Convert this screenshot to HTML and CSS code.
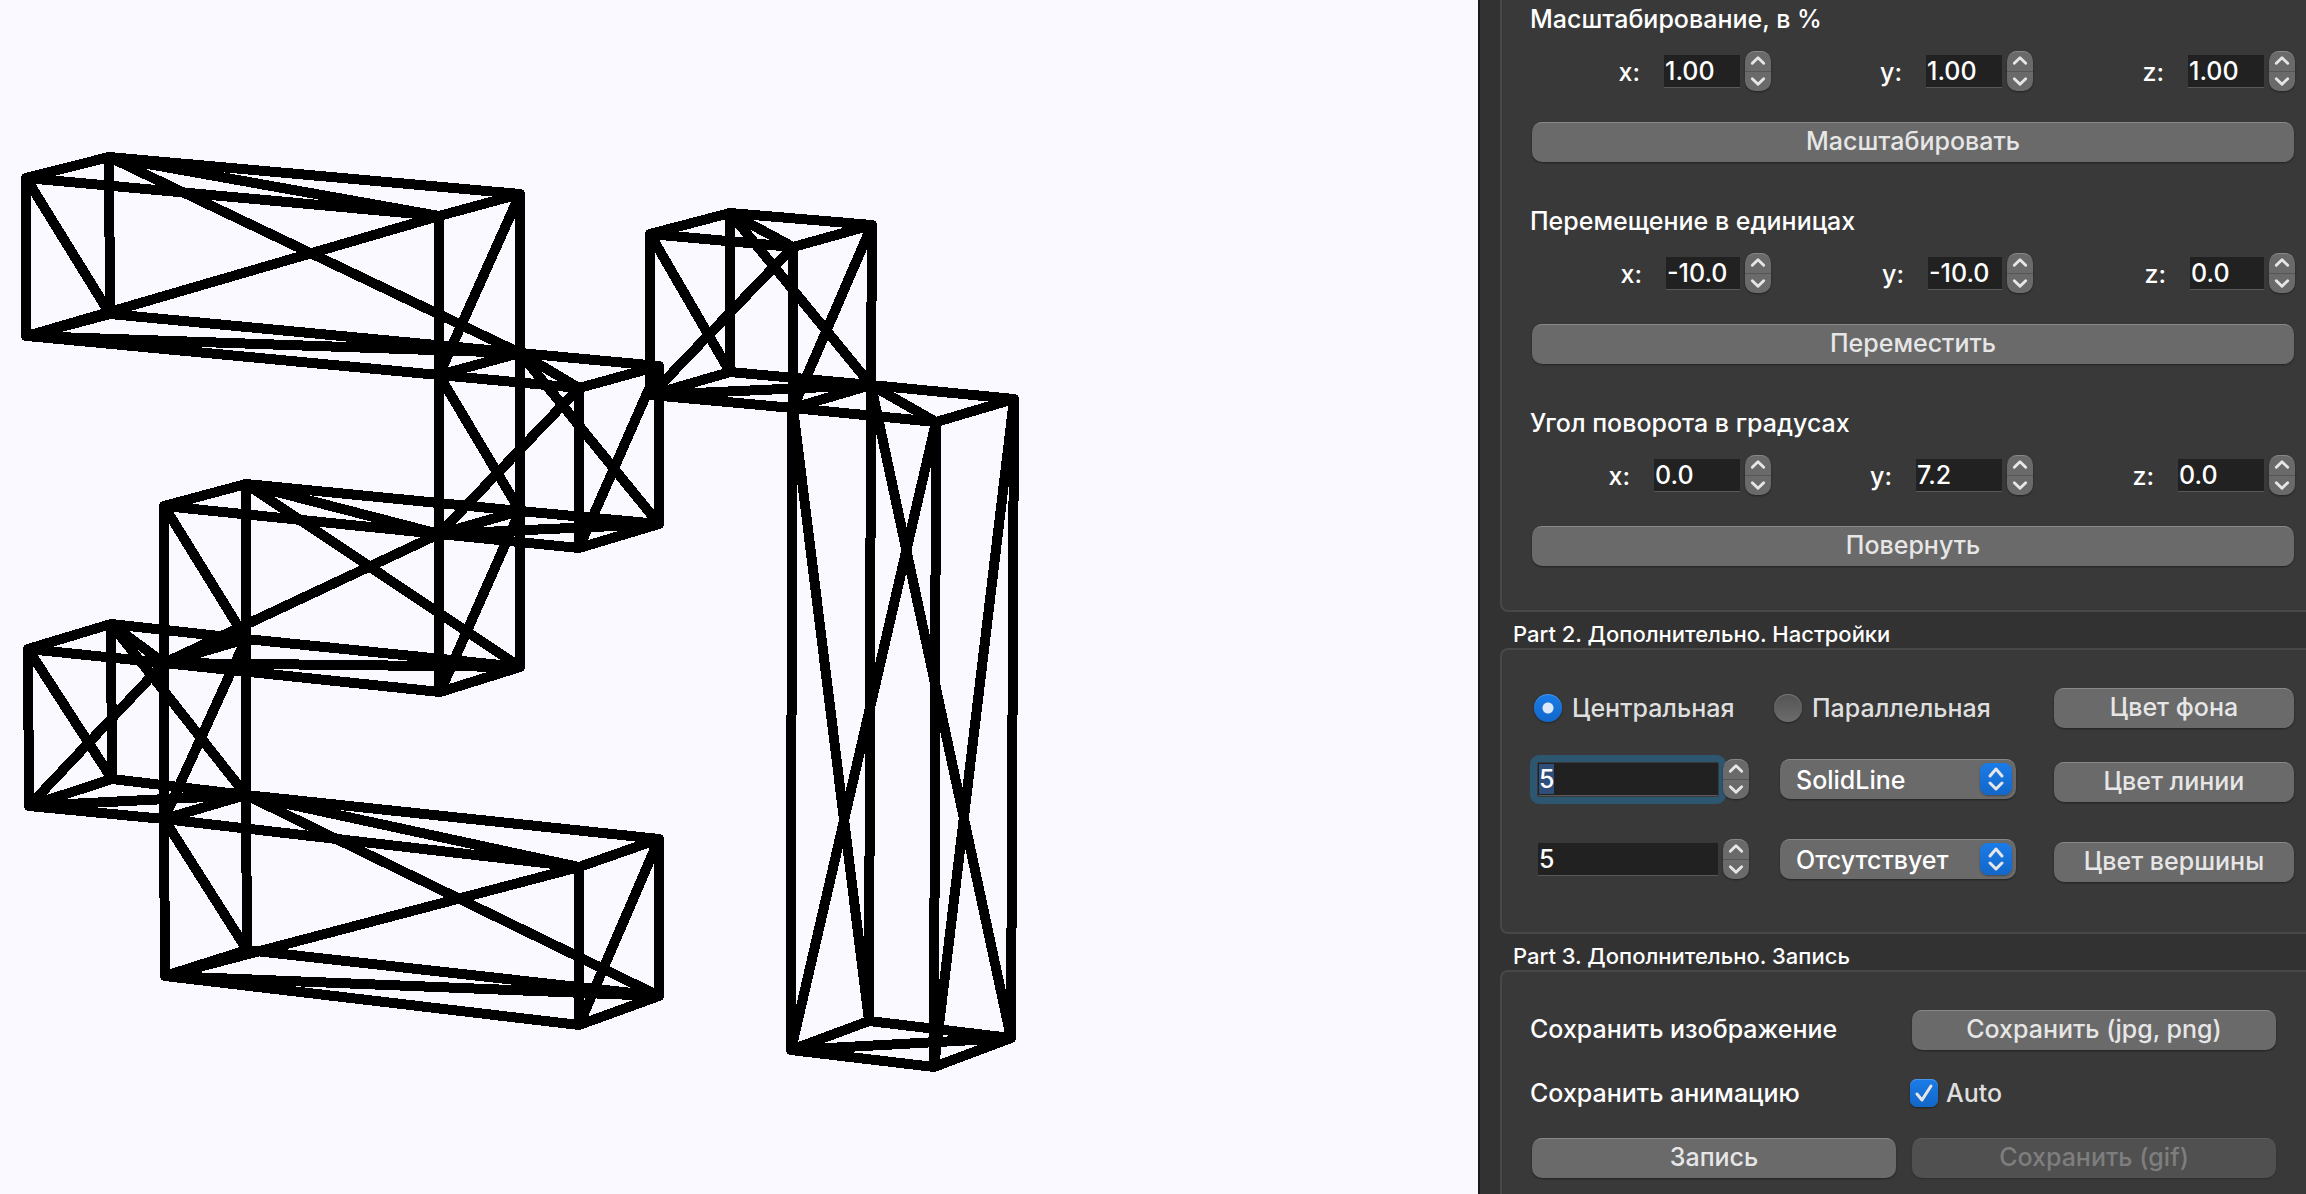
FILE: index.html
```
<!DOCTYPE html>
<html lang="ru">
<head>
<meta charset="utf-8">
<title>3D</title>
<link rel="stylesheet" href="styles.css">
</head>
<body>
<svg class="defs" aria-hidden="true">
  <symbol id="up" viewBox="0 0 26 20"><path d="M7 13l6-6 6 6"/></symbol>
  <symbol id="down" viewBox="0 0 26 20"><path d="M7 7l6 6 6-6"/></symbol>
  <symbol id="updown" viewBox="0 0 32 32"><path d="M10 13l6-7 6 7M10 20l6 6 6-6"/></symbol>
</svg>
<div class="app">
  <main class="scene">
    <svg class="scene-drawing" width="1478" height="1194" viewBox="0 0 1478 1194" role="img" aria-label="3D">
      <!-- each prism: top face, bottom face, uprights, face diagonals -->
      <path d="M26 178L109 157L520 194L439 216ZM27 336L110 314L520 353L439 375ZM26 178V336M109 157L110 314M520 194V353M439 216V375M26 178L110 314M109 157L439 216L27 336L520 353L109 157M520 194L439 375"/>
      <path d="M439 375L520 353L659 366L579 388ZM439 534L520 511L659 524L579 548ZM439 375V534M520 353V511M659 366V524M579 388V548M439 375L520 511M520 353L579 388L439 534L659 524L520 353M659 366L579 548"/>
      <path d="M164 506L246 484L520 511L439 534ZM164 663L246 639L520 667L440 692ZM164 506V663M246 484V639M520 511V667M439 534V692M164 506L246 639M246 484L439 534L164 663L520 667L246 484M520 511L440 692"/>
      <path d="M28 649L111 624L246 639L164 663ZM29 806L112 779L246 795L164 819ZM28 649L29 806M111 624L112 779M246 639V795M164 663V819M28 649L112 779M111 624L164 663L29 806L246 795L111 624M246 639L164 819"/>
      <path d="M164 819L246 795L659 839L579 867ZM165 976L247 950L659 996L579 1025ZM164 819L165 976M246 795L247 950M659 839V996M579 867V1025M164 819L247 950M246 795L579 867L165 976L659 996L246 795M659 839L579 1025"/>
      <path d="M650 234L730 213L872 225L793 247ZM651 395L730 372L871 385L793 408ZM650 234V395M730 213V372M872 225L871 385M793 247V408M650 234L730 372M730 213L793 247L651 395L871 385L730 213M872 225L793 408"/>
      <path d="M793 408L871 385L1014 399L936 422ZM791 1050L869 1021L1011 1038L934 1067ZM792 408L791 1050M871 385L869 1021M1014 399L1011 1038M936 422L934 1067M793 408L869 1021M871 385L936 422L791 1050L1011 1038L871 385M1014 399L934 1067"/>
    </svg>
  </main>

  <aside class="panel">
    <section class="group group-first">
      <div class="transform">
        <h3 class="caption">Масштабирование, в %</h3>
        <div class="axes axes-scale">
          <div class="axis"><label for="sx">x:</label><div class="spin"><input id="sx" type="text" inputmode="decimal" value="1.00"><div class="stepper"><button aria-label="+"><svg><use href="#up"/></svg></button><button aria-label="−"><svg><use href="#down"/></svg></button></div></div></div>
          <div class="axis"><label for="sy">y:</label><div class="spin"><input id="sy" type="text" inputmode="decimal" value="1.00"><div class="stepper"><button aria-label="+"><svg><use href="#up"/></svg></button><button aria-label="−"><svg><use href="#down"/></svg></button></div></div></div>
          <div class="axis"><label for="sz">z:</label><div class="spin"><input id="sz" type="text" inputmode="decimal" value="1.00"><div class="stepper"><button aria-label="+"><svg><use href="#up"/></svg></button><button aria-label="−"><svg><use href="#down"/></svg></button></div></div></div>
        </div>
        <button class="btn">Масштабировать</button>
      </div>
      <div class="transform">
        <h3 class="caption">Перемещение в единицах</h3>
        <div class="axes axes-move">
          <div class="axis"><label for="mx">x:</label><div class="spin"><input id="mx" type="text" inputmode="decimal" value="-10.0"><div class="stepper"><button aria-label="+"><svg><use href="#up"/></svg></button><button aria-label="−"><svg><use href="#down"/></svg></button></div></div></div>
          <div class="axis"><label for="my">y:</label><div class="spin"><input id="my" type="text" inputmode="decimal" value="-10.0"><div class="stepper"><button aria-label="+"><svg><use href="#up"/></svg></button><button aria-label="−"><svg><use href="#down"/></svg></button></div></div></div>
          <div class="axis"><label for="mz">z:</label><div class="spin"><input id="mz" type="text" inputmode="decimal" value="0.0"><div class="stepper"><button aria-label="+"><svg><use href="#up"/></svg></button><button aria-label="−"><svg><use href="#down"/></svg></button></div></div></div>
        </div>
        <button class="btn">Переместить</button>
      </div>
      <div class="transform">
        <h3 class="caption">Угол поворота в градусах</h3>
        <div class="axes axes-rotate">
          <div class="axis"><label for="rx">x:</label><div class="spin"><input id="rx" type="text" inputmode="decimal" value="0.0"><div class="stepper"><button aria-label="+"><svg><use href="#up"/></svg></button><button aria-label="−"><svg><use href="#down"/></svg></button></div></div></div>
          <div class="axis"><label for="ry">y:</label><div class="spin"><input id="ry" type="text" inputmode="decimal" value="7.2"><div class="stepper"><button aria-label="+"><svg><use href="#up"/></svg></button><button aria-label="−"><svg><use href="#down"/></svg></button></div></div></div>
          <div class="axis"><label for="rz">z:</label><div class="spin"><input id="rz" type="text" inputmode="decimal" value="0.0"><div class="stepper"><button aria-label="+"><svg><use href="#up"/></svg></button><button aria-label="−"><svg><use href="#down"/></svg></button></div></div></div>
        </div>
        <button class="btn">Повернуть</button>
      </div>
    </section>

    <h2 class="group-title">Part 2. Дополнительно. Настройки</h2>
    <section class="group settings">
      <div class="settings-row">
        <label class="choice"><input type="radio" name="projection" checked>Центральная</label>
        <label class="choice"><input type="radio" name="projection">Параллельная</label>
        <button class="btn">Цвет фона</button>
      </div>
      <div class="settings-row">
        <div class="spin"><input id="line-width" type="text" inputmode="numeric" value="5" aria-label="Линия" autofocus><div class="stepper"><button aria-label="+"><svg><use href="#up"/></svg></button><button aria-label="−"><svg><use href="#down"/></svg></button></div></div>
        <div class="dropdown"><select aria-label="Линия"><option>SolidLine</option></select><svg class="dropdown-mark"><use href="#updown"/></svg></div>
        <button class="btn">Цвет линии</button>
      </div>
      <div class="settings-row">
        <div class="spin"><input type="text" inputmode="numeric" value="5" aria-label="Вершина"><div class="stepper"><button aria-label="+"><svg><use href="#up"/></svg></button><button aria-label="−"><svg><use href="#down"/></svg></button></div></div>
        <div class="dropdown"><select aria-label="Вершина"><option>Отсутствует</option></select><svg class="dropdown-mark"><use href="#updown"/></svg></div>
        <button class="btn">Цвет вершины</button>
      </div>
    </section>

    <h2 class="group-title">Part 3. Дополнительно. Запись</h2>
    <section class="group record">
      <span class="caption">Сохранить изображение</span>
      <button class="btn">Сохранить (jpg, png)</button>
      <span class="caption">Сохранить анимацию</span>
      <label class="check"><span class="check-box"><input type="checkbox" checked><svg viewBox="0 0 28 28"><path d="M7 15l5 6 9-14"/></svg></span>Auto</label>
      <button class="btn">Запись</button>
      <button class="btn" disabled>Сохранить (gif)</button>
    </section>
  </aside>
</div>
<script src="app.js"></script>
</body>
</html>
```
FILE: app.js
```
const lineWidth = document.getElementById('line-width');
lineWidth.focus();
lineWidth.select();
```
FILE: styles.css
```
* { box-sizing: border-box; }

body {
  margin: 0;
  background: #323232;
  color: #fff;
  font: 500 25px/32px Inter, "Liberation Sans", sans-serif;
}

button, input, select {
  margin: 0;
  padding: 0;
  border: 0;
  color: inherit;
  font: inherit;
}

.defs { position: absolute; width: 0; height: 0; }

.app {
  display: grid;
  grid-template-columns: minmax(0, 1fr) 828px;
  height: 100vh;
  overflow: hidden;
}

.scene { overflow: hidden; background: #f9f9ff; }
.scene-drawing {
  display: block;
  fill: none;
  stroke: #000;
  stroke-width: 10px;
  stroke-linecap: round;
  stroke-linejoin: round;
  shape-rendering: crispEdges;
}

.panel {
  display: flex;
  flex-direction: column;
  min-height: 0;
  padding-left: 20px;
  border-left: 2px solid #1a1a1a;
  overflow: hidden;
}

.group {
  flex: none;
  padding: 38px 11px 0 28px;
  border: 2px solid #484848;
  border-right: 0;
  border-radius: 8px 0 0 8px;
  background: #393939;
}
.group-title {
  flex: none;
  margin: 0;
  padding: 8px 0 0 13px;
  font-size: 22px;
  font-weight: 500;
  line-height: 28px;
}
.caption { margin: 0; font-size: 25px; font-weight: 500; line-height: 32px; }

.btn {
  height: 40px;
  margin: 0 1px 0 2px;
  padding-bottom: 2px;
  border-radius: 10px;
  background: #6a6a6a;
  box-shadow: inset 0 2px 0 -1px #888, 0 1px 2px #0006;
  color: #e6e6e6;
  white-space: nowrap;
}
.btn:disabled { background: #505050; box-shadow: inset 0 2px 0 -1px #5d5d5d, 0 1px 2px #0003; color: #7e7e7e; }

/* transforms */
.group-first {
  display: flex;
  flex-direction: column;
  gap: 43px;
  padding-top: 3px;
  padding-bottom: 44px;
  border-top: 0;
  border-radius: 0 0 0 8px;
}
.transform { display: flex; flex-direction: column; }
.axes {
  display: grid;
  grid-template-columns: repeat(3, 1fr);
  gap: 21px;
  margin: 16px 0 31px;
}
.axis { display: flex; align-items: center; justify-content: flex-end; gap: 24px; }
.axis label { padding-top: 2px; }
.axis .spin input { width: 76px; }
.axes-move .spin input { width: 74px; }
.axes-rotate .spin input { width: 86px; }

/* spin boxes */
.spin { display: flex; align-items: center; gap: 5px; height: 40px; }
.spin input {
  min-width: 0;
  height: 33px;
  padding: 1px 1px 0;
  border-bottom: 1px solid #5a5a5a;
  background: #212121;
  outline: 0 solid #2d5671;
}
.spin input:focus { outline-width: 7px; outline-offset: 1px; border-radius: 1px; }
.spin input::selection { background: #2f4e7c; color: #fff; }
.stepper {
  display: flex;
  flex-direction: column;
  width: 26px;
  height: 40px;
  border-radius: 10px;
  background: #6a6a6a;
  box-shadow: inset 0 2px 0 -1px #888, 0 1px 2px #0006;
}
.stepper button { flex: 1; height: 20px; background: none; }
.stepper button + button { border-top: 1px solid #565656; }
.stepper svg { display: block; width: 26px; height: 19px; }
.stepper svg, .dropdown-mark, .check svg {
  fill: none;
  stroke: #e6e6e6;
  stroke-width: 3px;
  stroke-linecap: round;
  stroke-linejoin: round;
}

/* drawing settings */
.settings { padding-bottom: 50px; }
.settings-row {
  display: grid;
  grid-template-columns: 244px minmax(0, 1fr) 243px;
  height: 43px;
  margin-bottom: 37px;
}
.settings-row:first-child { height: 40px; margin-bottom: 31px; }
.settings-row:last-child { margin-bottom: 0; }
.settings-row .btn { align-self: end; }
.settings-row .spin { padding-left: 8px; }
.settings-row .spin input { width: 180px; }

.choice { display: flex; align-items: center; gap: 10px; padding-left: 4px; color: #dfdfdf; }
.choice + .choice { padding-left: 0; }
.choice input {
  flex: none;
  width: 28px;
  height: 28px;
  border-radius: 50%;
  appearance: none;
  background: linear-gradient(#545454, #6c6c6c);
  box-shadow: inset 0 1px 0 #777, 0 1px 2px #0006;
}
.choice input:checked {
  background: radial-gradient(circle, #dce9f8 5px, #0000 6px), linear-gradient(#1b7ce8, #1267c9);
  box-shadow: inset 0 1px 0 #4b97ec, 0 1px 2px #0006;
}

.dropdown { position: relative; height: 40px; margin: 0 36px 0 6px; }
.dropdown select {
  width: 100%;
  height: 40px;
  padding: 1px 40px 0 16px;
  border-radius: 10px;
  appearance: none;
  background: #6a6a6a;
  box-shadow: inset 0 2px 0 -1px #888, 0 1px 2px #0006;
}
.dropdown-mark {
  position: absolute;
  top: 4px;
  right: 4px;
  width: 32px;
  height: 32px;
  border-radius: 8px;
  background: linear-gradient(#1b7ce8, #1267c9);
  box-shadow: 0 1px 2px #0005;
  pointer-events: none;
}

/* recording */
.record {
  display: grid;
  grid-template-columns: 1fr 1fr;
  grid-auto-rows: 40px;
  gap: 24px 13px;
  flex: 1 0 auto;
  padding-right: 29px;
  border-bottom: 0;
  border-radius: 8px 0 0 0;
}
.record .caption { padding-top: 3px; }
.check { display: flex; align-items: center; gap: 8px; padding-bottom: 3px; color: #dfdfdf; }
.check-box { position: relative; width: 28px; height: 28px; }
.check input {
  display: block;
  width: 28px;
  height: 28px;
  border-radius: 7px;
  appearance: none;
  background: linear-gradient(#1b7ce8, #1267c9);
  box-shadow: inset 0 1px 0 #4b97ec, 0 1px 2px #0006;
}
.check svg { position: absolute; inset: 0; pointer-events: none; }
```
